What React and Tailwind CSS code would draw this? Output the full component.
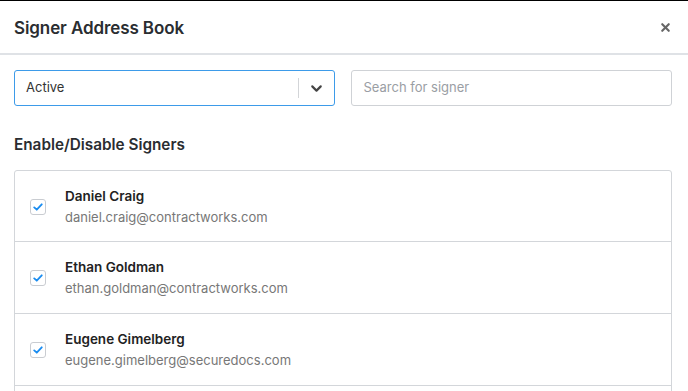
import { ChevronDown, X } from "lucide-react";

const signers = [
  { name: "Daniel Craig", email: "daniel.craig@contractworks.com" },
  { name: "Ethan Goldman", email: "ethan.goldman@contractworks.com" },
  { name: "Eugene Gimelberg", email: "eugene.gimelberg@securedocs.com" },
];

function Check() {
  return (
    <span className="flex h-4 w-4 items-center justify-center rounded-[3px] border border-[#c9ccd1] bg-white">
      <svg viewBox="0 0 12 12" className="h-[10px] w-[10px]">
        <path d="M1.5 6.5 L4.5 9.2 L10.5 2.8" fill="none" stroke="#1a8cf0" strokeWidth="2.2" strokeLinecap="round" strokeLinejoin="round" />
      </svg>
    </span>
  );
}

export default function App() {
  return (
    <div className="h-[391px] w-[688px] overflow-hidden border-t border-black bg-white font-['Inter',sans-serif] text-[#222]">
      <div className="flex h-[54px] items-center justify-between border-b-2 border-[#dfe2e6] pl-[14px] pr-[16px] pt-[3px]">
        <h1 className="text-[17px] font-semibold tracking-[-0.1px] text-[#2a2d31]">Signer Address Book</h1>
        <X className="-mt-[3px] h-[13px] w-[13px] text-[#666]" strokeWidth={4} />
      </div>

      <div className="pl-[14px] pr-[16px] pt-[15px]">
        <div className="flex gap-4">
          <div className="flex h-[36px] flex-1 items-center rounded-[3px] border border-[#3d9be9] pl-[11px]">
            <span className="flex-1 text-[13px] text-[#333]">Active</span>
            <span className="h-[20px] w-px bg-[#d3d5d8]" />
            <span className="flex w-[35px] justify-center">
              <ChevronDown className="h-[17px] w-[17px] text-[#444]" strokeWidth={3} />
            </span>
          </div>
          <div className="flex h-[36px] flex-1 items-center rounded-[3px] border border-[#cfd2d6] pl-[12px]">
            <span className="text-[13px] text-[#9a9ea4]">Search for signer</span>
          </div>
        </div>

        <h2 className="mt-[28px] text-[15.3px] font-semibold text-[#2a2d31]">Enable/Disable Signers</h2>

        <div className="mt-[13px] rounded-t-[3px] border border-[#d3d6da]">
          {signers.map((s, i) => (
            <div key={s.email} className={"flex items-center gap-[19px] pl-[15px] pt-[2px] " + (i > 0 ? "h-[72px] border-t border-[#d3d6da]" : "h-[70px]")}>
              <Check />
              <div className="leading-[21px]">
                <div className="text-[13.5px] font-semibold text-[#222]">{s.name}</div>
                <div className="text-[13px] text-[#777]">{s.email}</div>
              </div>
            </div>
          ))}
          <div className="h-[72px] border-t border-[#d3d6da]" />
        </div>
      </div>
    </div>
  );
}
